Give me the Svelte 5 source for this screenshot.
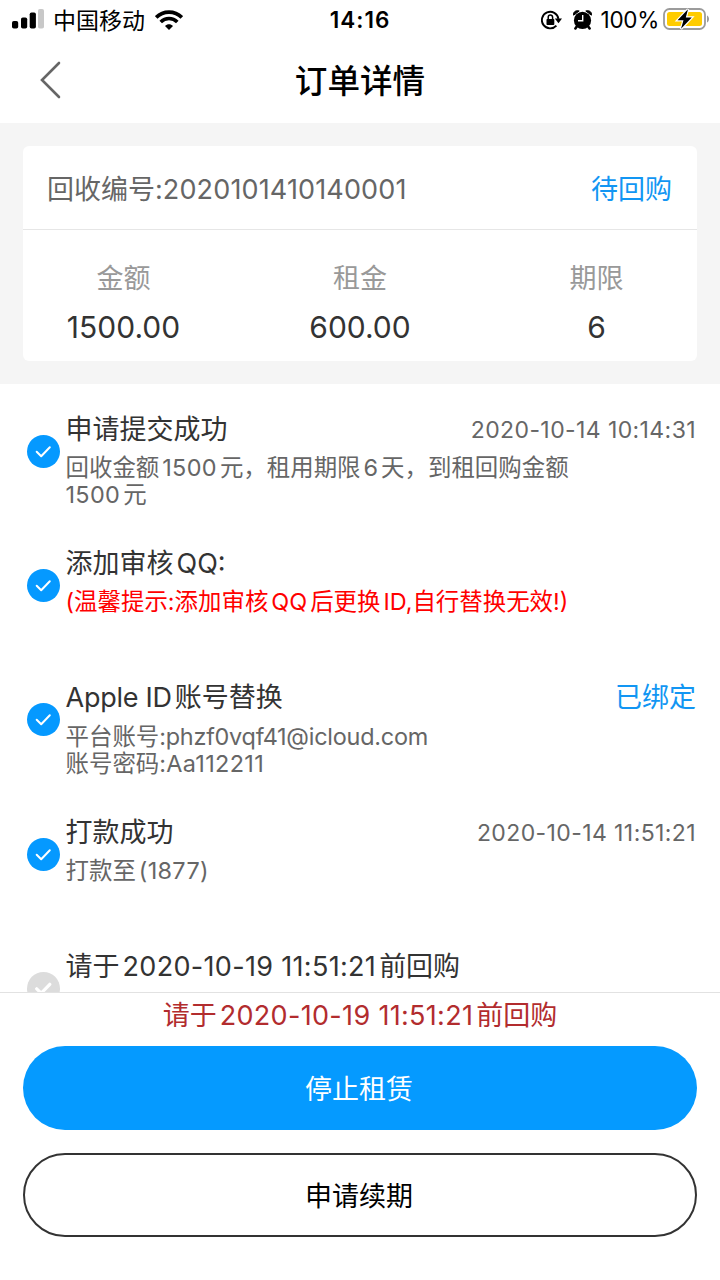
<script lang="ts">
  interface Step {
    title: string;
    lines?: string[];
    time?: string;
    tag?: string;
    warn?: boolean;
    pending?: boolean;
  }

  const orderNo = '2020101410140001';
  const deadline = '请于2020-10-19 11:51:21前回购';

  const summary = [
    { label: '金额', value: '1500.00' },
    { label: '租金', value: '600.00' },
    { label: '期限', value: '6' }
  ];

  const steps: Step[] = [
    {
      title: '申请提交成功',
      time: '2020-10-14 10:14:31',
      lines: ['回收金额1500元，租用期限6天，到租回购金额', '1500元']
    },
    { title: '添加审核QQ:', lines: ['(温馨提示:添加审核QQ后更换ID,自行替换无效!)'], warn: true },
    {
      title: 'Apple ID账号替换',
      tag: '已绑定',
      lines: ['平台账号:phzf0vqf41@icloud.com', '账号密码:Aa112211']
    },
    { title: '打款成功', time: '2020-10-14 11:51:21', lines: ['打款至(1877)'] },
    { title: deadline, pending: true }
  ];

  // split mixed text so latin runs can be spaced on their own
  function runs(text: string) {
    const parts = text.match(/[\x20-\x7e]+|[^\x20-\x7e]+/g) || [];
    return parts.map((t) => ({
      t,
      words: /[a-z]{3}/.test(t),
      digits: /\d{4}/.test(t) && !/[a-z]{3}/.test(t),
      before: /^[A-Za-z0-9(]/.test(t),
      after: /[A-Za-z0-9]$/.test(t)
    }));
  }
</script>

{#snippet mixed(text: string)}
  {#each runs(text) as r, i}<span class:words={r.words} class:digits={r.digits} class:gap-before={r.before && i > 0} class:gap-after={r.after}>{r.t}</span>{/each}
{/snippet}

<div class="page">
  <div class="status-bar">
    <div class="status-left">
      <svg class="signal" width="32" height="20" viewBox="0 0 32 20">
        <rect x="0" y="12" width="6.2" height="7.5" rx="1.8" />
        <rect x="9" y="8.5" width="6.2" height="11" rx="1.8" />
        <rect x="17.7" y="3.5" width="6.2" height="16" rx="1.8" />
        <rect x="26" y="0" width="6" height="19.5" rx="1.8" fill="#c8c8c8" />
      </svg>
      <span class="carrier">中国移动</span>
      <svg class="wifi" width="28" height="20" viewBox="0 0 28 20">
        <g fill="none" stroke="#000" stroke-width="3.6">
          <path d="M1.2 7.4C8.3 0.3 19.7 0.3 26.8 7.4" />
          <path d="M5.7 12C10.3 7.4 17.7 7.4 22.3 12" />
        </g>
        <path d="M10 16C12.3 13.8 15.7 13.8 18 16L14 20Z" />
      </svg>
    </div>
    <span class="clock">14:16</span>
    <div class="status-right">
      <svg width="21" height="20" viewBox="0 0 21 20">
        <path d="M15.4 15.6A8.3 8.3 0 1 1 17.4 8.8" fill="none" stroke="#000" stroke-width="1.9" />
        <path d="M13.8 8.6H21L17.5 13.2Z" />
        <rect x="5.5" y="9" width="7.8" height="6" rx="0.7" />
        <path d="M7.2 9.5V7.2A2.2 2.2 0 0 1 11.6 7.2V9.5" fill="none" stroke="#000" stroke-width="1.5" />
      </svg>
      <svg class="alarm" width="19" height="20" viewBox="0 0 19 20">
        <circle cx="9.5" cy="10.4" r="8.6" />
        <path d="M0.6 5.2C0 2 2.6 0 6.2 1Z" stroke="#000" />
        <path d="M18.4 5.2C19 2 16.4 0 12.8 1Z" stroke="#000" />
        <path d="M4.5 15.5L2.4 18.4M14.5 15.5L16.6 18.4" stroke="#000" stroke-width="2.6" stroke-linecap="round" />
        <path d="M9.7 5V10.7H5" fill="none" stroke="#fff" stroke-width="1.4" />
      </svg>
      <span class="percent">100%</span>
      <svg class="battery" width="47" height="22" viewBox="0 0 47 22">
        <rect x="1" y="1" width="41" height="20" rx="5.5" fill="#fff" stroke="#9b9b9b" stroke-width="1.8" />
        <rect x="4" y="4" width="35" height="14" rx="2.5" fill="#fc0" />
        <path d="M44 7.5C46.7 8.7 46.7 13.3 44 14.5Z" fill="#9b9b9b" />
        <path d="M25 1.2L14.5 12.3H20.5L18 20.8L28.8 9.5H22.8Z" stroke="#fff" stroke-width="2.4" paint-order="stroke" />
      </svg>
    </div>
  </div>

  <header class="nav">
    <button class="back" aria-label="返回">
      <svg width="22" height="38" viewBox="0 0 22 38">
        <path d="M20 2L3 19L20 36" fill="none" stroke="#666" stroke-width="2.6" stroke-linecap="round" />
      </svg>
    </button>
    <h1>订单详情</h1>
  </header>

  <section class="summary">
    <div class="card">
      <div class="card-head">
        <span class="order-no">回收编号:<span class="number">{orderNo}</span></span>
        <span class="state">待回购</span>
      </div>
      <div class="card-body">
        {#each summary as item}
          <div class="cell">
            <span class="label">{item.label}</span>
            <span class="value">{item.value}</span>
          </div>
        {/each}
      </div>
    </div>
  </section>

  <main class="steps">
    {#each steps as step}
      <div class="step">
        <svg class="dot" class:pending={step.pending} width="33" height="33" viewBox="0 0 33 33">
          <circle cx="16.5" cy="16.5" r="16.5" />
          <path d="M9.7 16.8L14.2 21.2L22.8 12.3" />
        </svg>
        <div class="content">
          <div class="title-row">
            <span class="title">{@render mixed(step.title)}</span>
            {#if step.time}<span class="time">{step.time}</span>{/if}
            {#if step.tag}<span class="tag">{step.tag}</span>{/if}
          </div>
          <div class="desc" class:warn={step.warn}>
            {#each step.lines || [] as line}
              <p>{@render mixed(line)}</p>
            {/each}
          </div>
        </div>
      </div>
    {/each}
  </main>

  <footer class="actions">
    <p class="deadline">{@render mixed(deadline)}</p>
    <button class="btn primary">停止租赁</button>
    <button class="btn outline">申请续期</button>
  </footer>
</div>

<style>
  :global(body) {
    margin: 0;
    background: #fff;
  }

  .page {
    width: 720px;
    height: 1280px;
    display: flex;
    flex-direction: column;
    overflow: hidden;
    background: #fff;
    color: #333;
    font-family: Inter, 'Noto Sans CJK SC', sans-serif;
    font-size: 27px;
    font-weight: 400;
    white-space: nowrap;
  }

  p,
  h1 {
    margin: 0;
  }

  button {
    font: inherit;
    padding: 0;
    border: none;
    background: none;
  }

  svg {
    display: block;
    flex: none;
  }

  .gap-before {
    margin-left: 3px;
  }

  .gap-after {
    margin-right: 3px;
  }

  .words {
    letter-spacing: -0.25px;
  }

  .digits {
    letter-spacing: 0.32px;
  }

  .number {
    letter-spacing: 0.15px;
  }

  .status-bar {
    height: 40px;
    flex: none;
    display: grid;
    grid-template-columns: 1fr auto 1fr;
    align-items: center;
    padding: 0 10px 0 12px;
    color: #000;
    font-size: 23px;
  }

  .status-left,
  .status-right {
    display: flex;
    align-items: center;
  }

  .status-right {
    justify-content: flex-end;
  }

  .carrier {
    margin: -2px 0 0 9px;
  }

  .signal {
    margin-bottom: 2px;
  }

  .wifi {
    margin-left: 10px;
  }

  .clock {
    font-weight: 600;
    font-size: 22.5px;
    letter-spacing: 1px;
    margin: -2px 2px 0 0;
  }

  .alarm {
    margin-left: 11px;
  }

  .percent {
    margin: -2px 0 0 9px;
    font-size: 22.5px;
    letter-spacing: -0.3px;
  }

  .battery {
    margin-left: 4px;
    margin-bottom: 2px;
  }

  .nav {
    height: 83px;
    flex: none;
    display: grid;
    grid-template-columns: 100px 1fr 100px;
    align-items: center;
  }

  .back {
    padding-left: 39px;
    margin-bottom: 3px;
  }

  h1 {
    font-size: 32.6px;
    line-height: 40px;
    margin-bottom: 1px;
    font-weight: 500;
    color: #000;
    text-align: center;
  }

  .summary {
    flex: none;
    height: 261px;
    box-sizing: border-box;
    padding: 23px;
    background: #f5f5f5;
  }

  .card {
    height: 215px;
    border-radius: 6px;
    background: #fff;
  }

  .card-head {
    height: 84px;
    box-sizing: border-box;
    display: flex;
    justify-content: space-between;
    align-items: center;
    padding: 0 25px 0 24px;
    border-bottom: 1px solid #e6e6e6;
  }

  .order-no {
    color: #666;
  }

  .state,
  .tag {
    color: #1296f3;
  }

  .card-body {
    display: grid;
    grid-template-columns: 201px 1fr 201px;
    padding-top: 30px;
  }

  .cell {
    display: flex;
    flex-direction: column;
    align-items: center;
    line-height: 38px;
  }

  .label {
    color: #999;
  }

  .value {
    margin-top: 10px;
    font-size: 30px;
  }

  .steps {
    flex: none;
    height: 608px;
    overflow: hidden;
  }

  .step {
    height: 134.4px;
    display: flex;
    align-items: center;
    padding: 0 24px 0 26.5px;
  }

  .dot circle {
    fill: #0599ff;
  }

  .dot path {
    fill: none;
    stroke: #fff;
    stroke-width: 2;
    stroke-linecap: round;
    stroke-linejoin: round;
  }

  .dot.pending circle {
    fill: #dcdcdc;
  }

  .dot.pending path {
    stroke-width: 3.2;
  }

  .content {
    flex: 1;
    height: 100%;
    box-sizing: border-box;
    padding: 24px 0 0 6px;
  }

  .title-row {
    display: flex;
    justify-content: space-between;
    align-items: center;
    height: 38px;
  }

  .time {
    padding-top: 6px;
    color: #666;
    font-size: 23px;
    letter-spacing: 0.4px;
  }

  .desc {
    margin-top: 8px;
    color: #666;
    font-size: 23.45px;
    line-height: 27px;
  }

  .warn {
    color: #f00;
  }

  .actions {
    flex: 1;
    border-top: 1px solid #e2e2e2;
    padding: 0 23px;
    background: #fff;
  }

  .deadline {
    height: 53px;
    line-height: 45px;
    color: #b22c2e;
    text-align: center;
  }

  .btn {
    display: block;
    width: 100%;
    height: 84px;
    box-sizing: border-box;
    border-radius: 42px;
    padding: 0 2px 2px 0;
  }

  .primary {
    background: #059aff;
    color: #fff;
  }

  .outline {
    margin-top: 23px;
    border: 2px solid #333;
    color: #000;
  }
</style>
